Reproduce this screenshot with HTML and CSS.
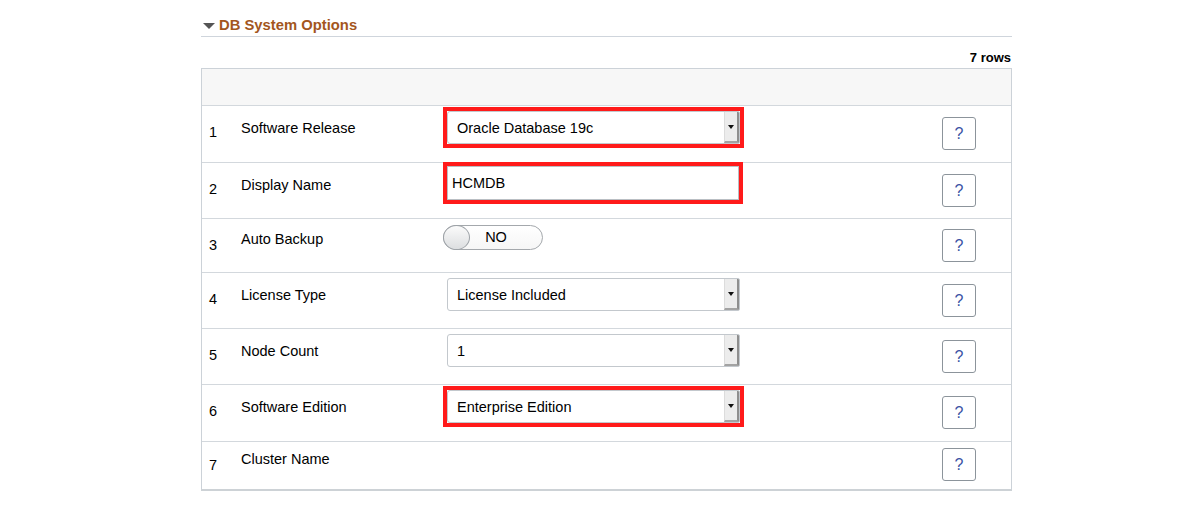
FILE: index.html
```html
<!DOCTYPE html>
<html lang="en">
<head>
<meta charset="utf-8">
<title>DB System Options</title>
<link rel="stylesheet" href="styles.css">
</head>
<body>
<div class="panel">
  <div class="sec-head">
    <span class="caret"></span>
    <span class="sec-title">DB System Options</span>
  </div>
  <div class="count">7 rows</div>
  <div class="grid">
    <div class="grid-head"></div>

    <div class="row row-tall">
      <div class="num">1</div>
      <div class="label">Software Release</div>
      <div class="field">
        <div class="frame hl">
          <div class="select"><span class="val">Oracle Database 19c</span><span class="arrow"><span class="tri"></span></span></div>
        </div>
      </div>
      <div class="help"><button class="qbtn">?</button></div>
    </div>

    <div class="row">
      <div class="num">2</div>
      <div class="label">Display Name</div>
      <div class="field field-up">
        <div class="frame hl">
          <div class="input">HCMDB</div>
        </div>
      </div>
      <div class="help"><button class="qbtn">?</button></div>
    </div>

    <div class="row row-short">
      <div class="num">3</div>
      <div class="label label-up">Auto Backup</div>
      <div class="field field-toggle">
        <div class="toggle"><span class="knob"></span><span class="tgl-text">NO</span></div>
      </div>
      <div class="help help-up"><button class="qbtn">?</button></div>
    </div>

    <div class="row">
      <div class="num">4</div>
      <div class="label">License Type</div>
      <div class="field">
        <div class="frame">
          <div class="select"><span class="val">License Included</span><span class="arrow"><span class="tri"></span></span></div>
        </div>
      </div>
      <div class="help"><button class="qbtn">?</button></div>
    </div>

    <div class="row">
      <div class="num">5</div>
      <div class="label">Node Count</div>
      <div class="field">
        <div class="frame">
          <div class="select"><span class="val">1</span><span class="arrow"><span class="tri"></span></span></div>
        </div>
      </div>
      <div class="help"><button class="qbtn">?</button></div>
    </div>

    <div class="row row-tall">
      <div class="num">6</div>
      <div class="label">Software Edition</div>
      <div class="field">
        <div class="frame hl">
          <div class="select"><span class="val">Enterprise Edition</span><span class="arrow"><span class="tri"></span></span></div>
        </div>
      </div>
      <div class="help"><button class="qbtn">?</button></div>
    </div>

    <div class="row row-last">
      <div class="num num-last">7</div>
      <div class="label label-last">Cluster Name</div>
      <div class="field"></div>
      <div class="help help-last"><button class="qbtn">?</button></div>
    </div>
  </div>
</div>
</body>
</html>
```
FILE: styles.css
```css
* { box-sizing: border-box; }
html, body { margin: 0; padding: 0; background: #fff; }
body {
  font-family: "Liberation Sans", Arial, Helvetica, sans-serif;
  color: #000;
}
.panel {
  width: 811px;
  margin-left: 201px;
  padding-top: 15px;
}
.sec-head {
  display: flex;
  align-items: center;
  height: 22px;
  padding-bottom: 1px;
  border-bottom: 1px solid #cfd5dc;
}
.caret {
  width: 0;
  height: 0;
  margin-left: 2px;
  margin-right: 4px;
  margin-top: 2px;
  border-left: 6px solid transparent;
  border-right: 6px solid transparent;
  border-top: 6px solid #555;
}
.sec-title {
  font-size: 14.8px;
  font-weight: bold;
  color: #a3561d;
  line-height: 20px;
}
.count {
  text-align: right;
  font-size: 13px;
  font-weight: bold;
  line-height: 16px;
  margin-top: 13px;
  padding-right: 1px;
  height: 18px;
}
.grid {
  border: 1px solid #ccd2d8;
  border-bottom: 2px solid #cdd2d6;
}
.grid-head {
  height: 37px;
  background: #f7f7f7;
  border-bottom: 1px solid #d3d8dd;
}
.row {
  display: flex;
  height: 56px;
  border-bottom: 1px solid #d3d8dd;
  font-size: 14.5px;
  line-height: 17px;
}
.row-tall { height: 57px; }
.row-short { height: 54px; }
.row-last { height: 47px; border-bottom: none; }
.num {
  width: 39px;
  padding-left: 7px;
  padding-top: 18px;
}
.num-last { padding-top: 15px; }
.label {
  width: 202px;
  padding-top: 14px;
}
.label-up { padding-top: 12px; }
.label-last { padding-top: 9px; }
.field {
  width: 499px;
  padding-top: 1px;
}
.field-up { margin-top: -2px; }
.field-toggle { padding-top: 6px; }
.help {
  flex: 1;
  padding-top: 11px;
  padding-left: 0;
}
.help-up { padding-top: 10px; }
.help-last { padding-top: 6px; }

.frame {
  display: inline-block;
  border: 4px solid transparent;
}
.frame.hl { border-color: #ff1a1a; }

.select {
  display: flex;
  width: 293px;
  height: 33px;
  border: 1px solid #c3c8cd;
  border-radius: 3px 2px 2px 3px;
  background: #fff;
  overflow: hidden;
}
.val {
  flex: 1;
  padding-left: 9px;
  line-height: 32px;
  font-size: 14.5px;
}
.arrow {
  width: 15px;
  height: 31px;
  background: #ececec;
  border-left: 1px solid #dcdcdc;
  border-right: 2px solid #8e8e8e;
  border-bottom: 2px solid #a3a3a3;
  display: flex;
  align-items: center;
  justify-content: center;
}
.tri {
  width: 0;
  height: 0;
  border-left: 3px solid transparent;
  border-right: 3px solid transparent;
  border-top: 4px solid #111;
  margin-top: 1px;
}
.input {
  width: 292px;
  height: 34px;
  border: 1px solid #b9bec3;
  background: #fff;
  padding-left: 4px;
  line-height: 32px;
  font-size: 14.5px;
}
.toggle {
  position: relative;
  width: 100px;
  height: 25px;
  border: 1px solid #a4a8ac;
  border-radius: 13px;
  background: linear-gradient(#ffffff, #f6f6f6);
  display: flex;
  align-items: center;
}
.knob {
  position: absolute;
  left: -1px;
  top: -1px;
  width: 27px;
  height: 25px;
  border-radius: 50%;
  border: 1px solid #9da2a7;
  background: linear-gradient(#fbfbfb, #dcdee0);
}
.tgl-text {
  width: 100%;
  text-align: center;
  padding-left: 6px;
  font-size: 14.5px;
  line-height: 17px;
}
.qbtn {
  width: 34px;
  height: 33px;
  border: 1px solid #8c949b;
  border-radius: 3px;
  background: #fff;
  color: #3b53a5;
  font-family: "Liberation Sans", Arial, sans-serif;
  font-size: 16px;
  padding: 0;
  margin: 0;
  line-height: 31px;
}
```
